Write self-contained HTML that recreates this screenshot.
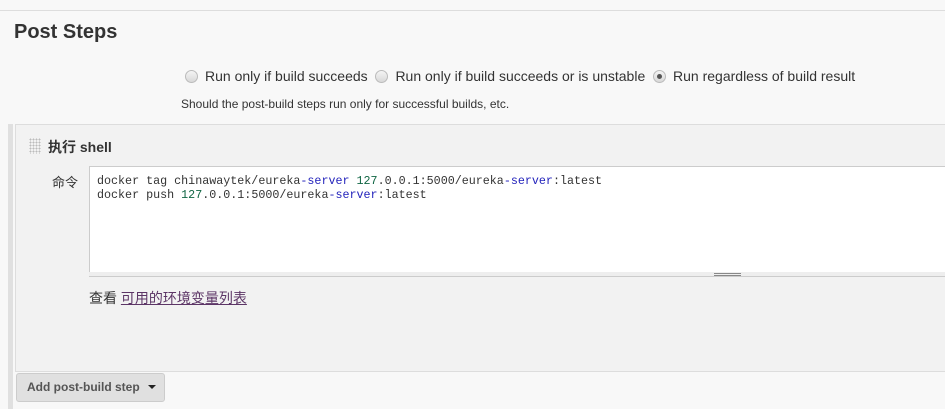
<!DOCTYPE html>
<html><head><style>
body{margin:0;width:945px;height:409px;background:#f8f8f8;font-family:"Liberation Sans","Noto Sans CJK SC",sans-serif;position:relative;overflow:hidden;color:#333}
.a{position:absolute}
.r{display:inline-block;width:11px;height:11px;border-radius:50%;border:1px solid #bbb;background:linear-gradient(#f4f4f4,#d8d8d8);vertical-align:-2px;margin-right:7px;position:relative}
.mono{font-family:"Liberation Mono","Noto Sans CJK SC",monospace;font-size:11.7px;line-height:14px;color:#333}
.g{color:#116644}.b{color:#2222bb}
</style></head><body>
<div class="a" style="left:0;top:10px;width:945px;height:1px;background:#ddd"></div>
<div class="a" style="left:14px;top:21px;font-size:20px;font-weight:bold;color:#333">Post Steps</div>
<div class="a" style="left:185px;top:68px;font-size:14px;color:#333;white-space:nowrap">
<span class="r"></span>Run only if build succeeds&nbsp;&nbsp;<span class="r"></span>Run only if build succeeds or is unstable&nbsp;&nbsp;<span class="r"><span style="position:absolute;left:3px;top:3px;width:5px;height:5px;border-radius:50%;background:#555"></span></span>Run regardless of build result</div>
<div class="a" style="left:181px;top:97px;font-size:12px;color:#333">Should the post-build steps run only for successful builds, etc.</div>
<div class="a" style="left:8px;top:124px;width:5px;height:285px;background:#e0e0e0"></div>
<div class="a" style="left:15px;top:124px;width:940px;height:246px;background:#f2f2f2;border-top:1px solid #ddd;border-left:1px solid #ddd;border-bottom:1px solid #ddd"></div>
<div class="a" style="left:29px;top:138px;width:12px;height:16px;background-image:radial-gradient(#bbb 0.8px,transparent 0.9px);background-size:3px 3px"></div>
<div class="a" style="left:48px;top:137px;font-size:14px;font-weight:bold;color:#333">执行 shell</div>
<div class="a" style="left:52px;top:172px;font-size:13px;color:#333">命令</div>
<div class="a" style="left:89px;top:166px;width:860px;height:105px;background:#fff;border:1px solid #ccc"></div>
<div class="a mono" style="left:97px;top:174px;white-space:pre">docker tag chinawaytek/eureka<span class="b">-server</span> <span class="g">127</span>.0.0.1:5000/eureka<span class="b">-server</span>:latest
docker push <span class="g">127</span>.0.0.1:5000/eureka<span class="b">-server</span>:latest</div>
<div class="a" style="left:89px;top:272px;width:860px;height:4px;background:#eee;border-bottom:1px solid #ccc"></div>
<div class="a" style="left:714px;top:273px;width:27px;height:1px;background:#888;box-shadow:0 2px 0 #888"></div>
<div class="a" style="left:89px;top:288px;font-size:14px;color:#333">查看 <span style="color:#5c3566;text-decoration:underline">可用的环境变量列表</span></div>
<div class="a" style="left:16px;top:373px;width:147px;height:27px;background:#e0e0e0;border:1px solid #ccc;border-radius:3px"></div>
<div class="a" style="left:27px;top:380px;font-size:12px;font-weight:bold;color:#555">Add post-build step</div>
<div class="a" style="left:148px;top:385px;width:0;height:0;border-left:4px solid transparent;border-right:4px solid transparent;border-top:4px solid #222"></div>
</body></html>
